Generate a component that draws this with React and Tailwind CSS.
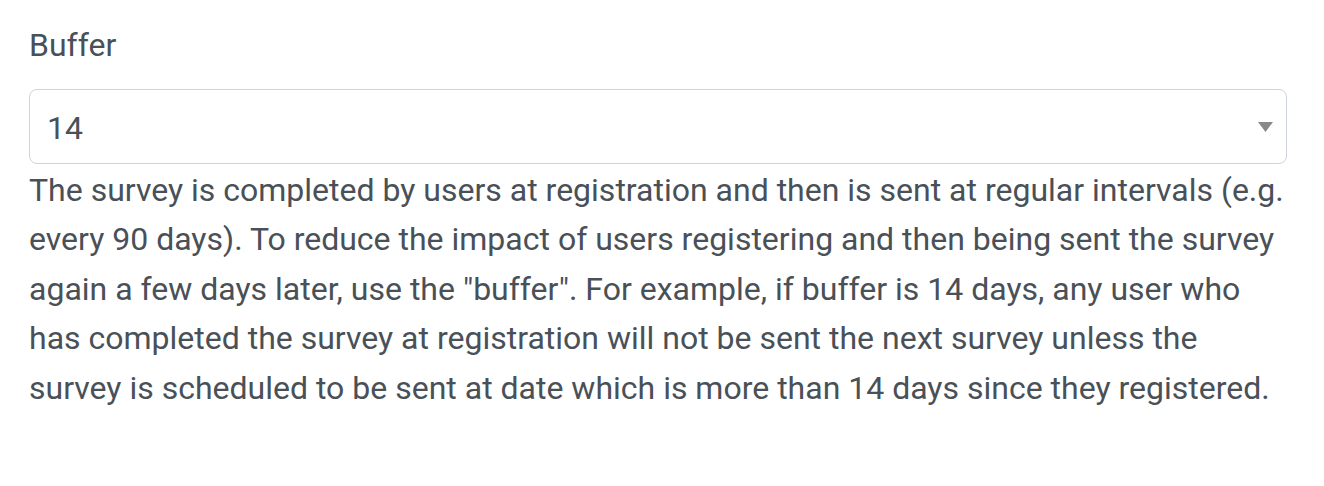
const App = () => {
  return (
    <div className="min-h-[486px] w-[1324px] bg-white pl-[29px] pr-[30px] pt-[21px] text-[#495057]" style={{ fontFamily: 'Roboto, "Liberation Sans", sans-serif' }}>
      <label className="block text-[32px] leading-[49.5px]">Buffer</label>

      {/* Select box */}
      <div className="mt-[18px] flex h-[75px] w-[1258px] items-center justify-between rounded-[8px] border border-[#ced4da] bg-white pl-[17px] pr-[13px]">
        <span className="mt-[5px] text-[32px] leading-[49.5px]">14</span>
        <svg width="15" height="10" viewBox="0 0 15 10" className="mt-[1px]">
          <path d="M0 0 H15 L7.5 10 Z" fill="#888888" />
        </svg>
      </div>

      <p className="mt-[2px] text-[32px] leading-[49.5px] whitespace-nowrap">
        The survey is completed by users at registration and then is sent at regular intervals (e.g.<br />
        every 90 days). To reduce the impact of users registering and then being sent the survey<br />
        again a few days later, use the "buffer". For example, if buffer is 14 days, any user who<br />
        has completed the survey at registration will not be sent the next survey unless the<br />
        survey is scheduled to be sent at date which is more than 14 days since they registered.
      </p>
    </div>
  );
};

export default App;
